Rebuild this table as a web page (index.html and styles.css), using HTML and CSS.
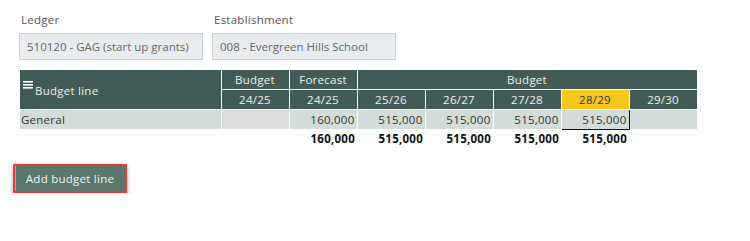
FILE: index.html
```html
<!DOCTYPE html>
<html>
<head>
<meta charset="utf-8">
<link rel="stylesheet" href="styles.css">
</head>
<body>
<div class="page">
  <div class="filters">
    <div class="field">
      <label class="label">Ledger</label>
      <div class="input">510120 - GAG (start up grants)</div>
    </div>
    <div class="field">
      <label class="label">Establishment</label>
      <div class="input">008 - Evergreen Hills School</div>
    </div>
  </div>
  <table class="grid">
    <colgroup>
      <col class="c-name"><col class="c-num"><col class="c-num"><col class="c-num"><col class="c-num"><col class="c-num"><col class="c-num"><col class="c-num">
    </colgroup>
    <thead>
      <tr>
        <th rowspan="2" class="h-name">
          <span class="menu"><svg width="10" height="8" viewBox="0 0 10 8"><rect x="0" y="0" width="10" height="1.6" fill="#fff"/><rect x="0" y="3" width="10" height="1.6" fill="#fff"/><rect x="0" y="6" width="10" height="1.6" fill="#fff"/></svg></span><span class="h-title">Budget line</span>
        </th>
        <th>Budget</th>
        <th>Forecast</th>
        <th colspan="5">Budget</th>
      </tr>
      <tr>
        <th>24/25</th>
        <th>24/25</th>
        <th>25/26</th>
        <th>26/27</th>
        <th>27/28</th>
        <th class="current">28/29</th>
        <th>29/30</th>
      </tr>
    </thead>
    <tbody>
      <tr class="row">
        <td class="name">General</td>
        <td class="empty"></td>
        <td>160,000</td>
        <td>515,000</td>
        <td>515,000</td>
        <td>515,000</td>
        <td class="selected">515,000</td>
        <td></td>
      </tr>
      <tr class="total">
        <td class="blank"></td>
        <td class="blank"></td>
        <td>160,000</td>
        <td>515,000</td>
        <td>515,000</td>
        <td>515,000</td>
        <td>515,000</td>
        <td class="blank"></td>
      </tr>
    </tbody>
  </table>
  <div class="actions">
    <button class="btn">Add budget line</button>
  </div>
</div>
</body>
</html>
```
FILE: styles.css
```css
html, body {
  margin: 0;
  padding: 0;
  background: #fff;
}
body {
  font-family: "Open Sans", "DejaVu Sans", sans-serif;
  font-size: 11.5px;
  letter-spacing: 0.25px;
  color: #333;
}
.page {
  padding: 12px 0 0 20px;
}
.filters {
  display: flex;
  gap: 10px;
}
.field {
  display: flex;
  flex-direction: column;
}
.label {
  color: #555;
  font-size: 11.5px;
  line-height: 16px;
  margin-left: 1px;
  margin-bottom: 5px;
}
.input {
  box-sizing: border-box;
  width: 184px;
  height: 27px;
  margin-left: -1px;
  background: #e9ecef;
  border: 1px solid #cdd1d4;
  color: #666;
  padding: 0 0 0 7px;
  line-height: 25px;
  letter-spacing: 0;
  white-space: nowrap;
}
.grid {
  margin-top: 10px;
  border-collapse: collapse;
  table-layout: fixed;
  width: 677px;
}
.c-name { width: 201px; }
.c-num { width: 68px; }
.grid th {
  background: #425b57;
  color: #f0f0f0;
  font-weight: normal;
  height: 19px;
  padding: 0;
  border: 1px solid #fff;
  text-align: center;
  font-size: 11.5px;
  line-height: 18px;
}
.grid thead tr:first-child th { border-top: none; }
.grid tr > :first-child { border-left: none; }
.grid th.h-name {
  text-align: left;
  vertical-align: middle;
  padding-left: 3px;
}
.menu {
  display: inline-block;
  vertical-align: top;
  margin-top: -3px;
  margin-right: 2px;
}
.h-title {
  display: inline-block;
  vertical-align: middle;
  margin-top: 3px;
}
.grid th.current {
  background: #f5c81e;
  color: #333;
}
.grid td {
  height: 19px;
  padding: 0 2px 0 0;
  border: 1px solid #fff;
  text-align: right;
  font-size: 11.5px;
  line-height: 18px;
  color: #333;
  white-space: nowrap;
}
.row td {
  background: #d3dcd8;
}
.row td.name {
  text-align: left;
  padding-left: 1px;
}
.row td.empty {
  background: #dcdcdc;
}
.row td.selected {
  border: 1px solid #111;
}
.total td {
  background: #fff;
  font-weight: bold;
  color: #111;
  border: none;
  height: 18px;
}
.actions {
  padding: 16px 0 0 0;
  margin-left: -7px;
}
.btn {
  font-family: inherit;
  font-size: 11.5px;
  letter-spacing: 0.25px;
  color: #f4f4f4;
  background: #5a766d;
  border: 2px solid #e8393f;
  box-shadow: inset 1px 0 0 #9fb0aa, 0 3px 5px rgba(0,0,0,0.35);
  height: 29px;
  width: 114px;
  padding: 0;
  cursor: pointer;
}
```
